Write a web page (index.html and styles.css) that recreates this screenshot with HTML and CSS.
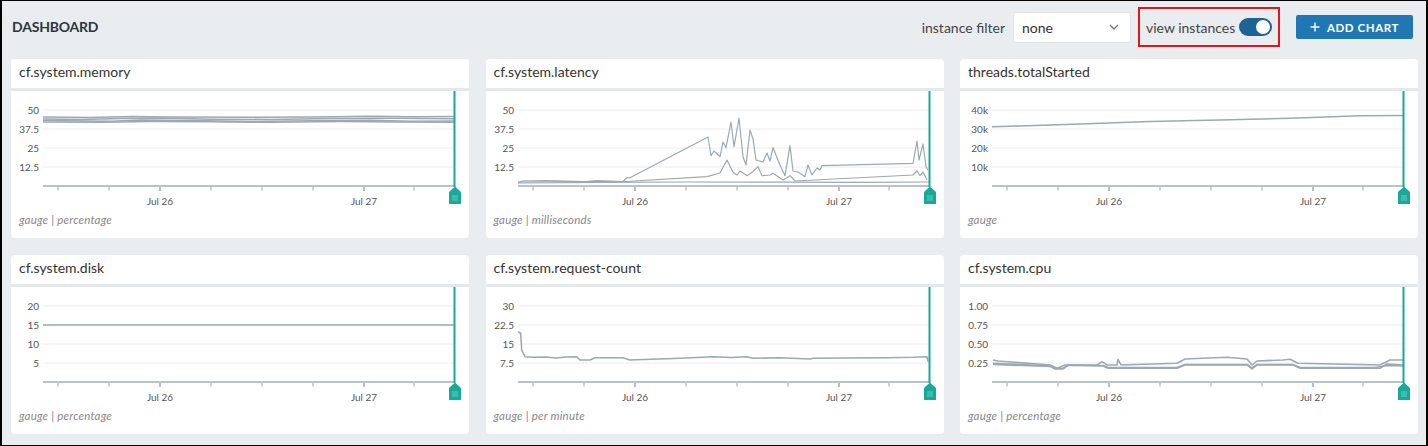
FILE: index.html
```html
<!DOCTYPE html>
<html>
<head>
<meta charset="utf-8">
<link rel="stylesheet" href="styles.css">
</head>
<body>
<div class="frame">
  <header class="topbar">
    <h1 class="title">DASHBOARD</h1>
    <div class="controls">
      <span class="label">instance filter</span>
      <div class="select">
        <span>none</span>
        <svg class="chev" width="10" height="6" viewBox="0 0 10 6"><path d="M1 1 L5 5 L9 1" fill="none" stroke="#777" stroke-width="1.3"/></svg>
      </div>
      <div class="highlight">
        <span class="label">view instances</span>
        <span class="toggle"><span class="knob"></span></span>
      </div>
      <button class="add">
        <svg width="10" height="10" viewBox="0 0 10 10"><path d="M5 0.5 V9.5 M0.5 5 H9.5" stroke="#fff" stroke-width="1.4"/></svg>
        ADD CHART
      </button>
    </div>
  </header>

  <main class="grid">
    <!-- memory -->
    <section class="card">
      <div class="card-title">cf.system.memory</div>
      <svg class="chart" viewBox="0 0 458 118" width="458" height="118">
        <g class="grid-lines"><line x1="32" x2="443" y1="19" y2="19"/><line x1="32" x2="443" y1="38" y2="38"/><line x1="32" x2="443" y1="57" y2="57"/><line x1="32" x2="443" y1="76" y2="76"/></g>
        <g class="ylab"><text x="28" y="22.5">50</text><text x="28" y="41.5">37.5</text><text x="28" y="60.5">25</text><text x="28" y="79.5">12.5</text></g>
        <g class="series">
          <polyline points="32,26 80,26.5 120,25.5 160,26 240,26.3 300,26 360,25.3 400,25.8 443,25.5"/>
          <polyline points="32,28 70,28.5 110,27.5 150,27 200,28.2 260,28.5 320,27.5 380,27.3 443,27.8"/>
          <polyline points="32,29.5 100,30.3 130,29 180,29.6 240,30.6 300,29.8 360,29.2 400,30.2 443,30"/>
          <polyline points="32,31 90,31.3 140,30.5 200,30.8 260,31.2 330,30.5 390,31 443,31.3"/>
        </g>
        <g class="axis">
          <line class="base" x1="32" x2="443" y1="95" y2="95"/>
          <line x1="47" x2="47" y1="96" y2="99.5"/><line x1="98" x2="98" y1="96" y2="99.5"/><line class="major" x1="149" x2="149" y1="96" y2="100"/><line x1="200" x2="200" y1="96" y2="99.5"/><line x1="251" x2="251" y1="96" y2="99.5"/><line x1="302" x2="302" y1="96" y2="99.5"/><line class="major" x1="353" x2="353" y1="96" y2="100"/><line x1="403" x2="403" y1="96" y2="99.5"/>
          <text class="xlab" x="149" y="113.5">Jul 26</text><text class="xlab" x="353" y="113.5">Jul 27</text>
        </g>
        <g class="cursor"><line x1="443.5" x2="443.5" y1="0" y2="96"/><path d="M438 101 L444 95.5 L450 101 L450 113 L438 113 Z"/><path class="grip" d="M442 104 V110 M444 104 V110 M446 104 V110"/></g>
      </svg>
      <div class="card-foot">gauge | percentage</div>
    </section>

    <!-- latency -->
    <section class="card">
      <div class="card-title">cf.system.latency</div>
      <svg class="chart" viewBox="0 0 458 118" width="458" height="118">
        <g class="grid-lines"><line x1="32" x2="443" y1="19" y2="19"/><line x1="32" x2="443" y1="38" y2="38"/><line x1="32" x2="443" y1="57" y2="57"/><line x1="32" x2="443" y1="76" y2="76"/></g>
        <g class="ylab"><text x="28" y="22.5">50</text><text x="28" y="41.5">37.5</text><text x="28" y="60.5">25</text><text x="28" y="79.5">12.5</text></g>
        <g class="series thin">
          <polyline points="32,92 36,90 60,89.5 100,90.5 110,89.5 137,90.5 141,86.5 144,86.8 222,46 225,64.7 228,60 234,65.7 237,51 240,56.7 245,31 248,55.7 253,27 257,65.7 260,74 264,39 267,48 270,69 277,71 281,62 284,70 287,56.7 294,74 299,84.7 304,54.7 307,80 312,81 319,85.7 322,74 326,84 331,77 334,79 336,74.7 427,72.3 431,50 433,69 437,53 440,75.7 442,79"/>
          <polyline points="32,91 80,90.5 140,90.5 221,85.7 234,82 241,69 247,81.3 251,84 254,80 261,84.7 267,80.7 272,75.7 276,84.7 284,84 287,82.3 297,89 304,84.7 309,90 427,84 431,80 434,84.7 437,81 441,89"/>
          <polyline points="32,92 120,91.3 200,91 300,91.2 380,91.3 443,91"/>
        </g>
        <g class="axis">
          <line class="base" x1="32" x2="443" y1="95" y2="95"/>
          <line x1="47" x2="47" y1="96" y2="99.5"/><line x1="98" x2="98" y1="96" y2="99.5"/><line class="major" x1="149" x2="149" y1="96" y2="100"/><line x1="200" x2="200" y1="96" y2="99.5"/><line x1="251" x2="251" y1="96" y2="99.5"/><line x1="302" x2="302" y1="96" y2="99.5"/><line class="major" x1="353" x2="353" y1="96" y2="100"/><line x1="403" x2="403" y1="96" y2="99.5"/>
          <text class="xlab" x="149" y="113.5">Jul 26</text><text class="xlab" x="353" y="113.5">Jul 27</text>
        </g>
        <g class="cursor"><line x1="443.5" x2="443.5" y1="0" y2="96"/><path d="M438 101 L444 95.5 L450 101 L450 113 L438 113 Z"/><path class="grip" d="M442 104 V110 M444 104 V110 M446 104 V110"/></g>
      </svg>
      <div class="card-foot">gauge | milliseconds</div>
    </section>

    <!-- threads -->
    <section class="card">
      <div class="card-title">threads.totalStarted</div>
      <svg class="chart" viewBox="0 0 458 118" width="458" height="118">
        <g class="grid-lines"><line x1="32" x2="443" y1="19" y2="19"/><line x1="32" x2="443" y1="38" y2="38"/><line x1="32" x2="443" y1="57" y2="57"/><line x1="32" x2="443" y1="76" y2="76"/></g>
        <g class="ylab"><text x="28" y="22.5">40k</text><text x="28" y="41.5">30k</text><text x="28" y="60.5">20k</text><text x="28" y="79.5">10k</text></g>
        <g class="series">
          <polyline points="32,35.7 60,35 120,33 190,30.5 260,29 330,27.3 400,24.8 443,24.5"/>
        </g>
        <g class="axis">
          <line class="base" x1="32" x2="443" y1="95" y2="95"/>
          <line x1="47" x2="47" y1="96" y2="99.5"/><line x1="98" x2="98" y1="96" y2="99.5"/><line class="major" x1="149" x2="149" y1="96" y2="100"/><line x1="200" x2="200" y1="96" y2="99.5"/><line x1="251" x2="251" y1="96" y2="99.5"/><line x1="302" x2="302" y1="96" y2="99.5"/><line class="major" x1="353" x2="353" y1="96" y2="100"/><line x1="403" x2="403" y1="96" y2="99.5"/>
          <text class="xlab" x="149" y="113.5">Jul 26</text><text class="xlab" x="353" y="113.5">Jul 27</text>
        </g>
        <g class="cursor"><line x1="443.5" x2="443.5" y1="0" y2="96"/><path d="M438 101 L444 95.5 L450 101 L450 113 L438 113 Z"/><path class="grip" d="M442 104 V110 M444 104 V110 M446 104 V110"/></g>
      </svg>
      <div class="card-foot">gauge</div>
    </section>

    <!-- disk -->
    <section class="card">
      <div class="card-title">cf.system.disk</div>
      <svg class="chart" viewBox="0 0 458 118" width="458" height="118">
        <g class="grid-lines"><line x1="32" x2="443" y1="19" y2="19"/><line x1="32" x2="443" y1="38" y2="38"/><line x1="32" x2="443" y1="57" y2="57"/><line x1="32" x2="443" y1="76" y2="76"/></g>
        <g class="ylab"><text x="28" y="22.5">20</text><text x="28" y="41.5">15</text><text x="28" y="60.5">10</text><text x="28" y="79.5">5</text></g>
        <g class="series">
          <polyline points="32,38 443,38"/>
        </g>
        <g class="axis">
          <line class="base" x1="32" x2="443" y1="95" y2="95"/>
          <line x1="47" x2="47" y1="96" y2="99.5"/><line x1="98" x2="98" y1="96" y2="99.5"/><line class="major" x1="149" x2="149" y1="96" y2="100"/><line x1="200" x2="200" y1="96" y2="99.5"/><line x1="251" x2="251" y1="96" y2="99.5"/><line x1="302" x2="302" y1="96" y2="99.5"/><line class="major" x1="353" x2="353" y1="96" y2="100"/><line x1="403" x2="403" y1="96" y2="99.5"/>
          <text class="xlab" x="149" y="113.5">Jul 26</text><text class="xlab" x="353" y="113.5">Jul 27</text>
        </g>
        <g class="cursor"><line x1="443.5" x2="443.5" y1="0" y2="96"/><path d="M438 101 L444 95.5 L450 101 L450 113 L438 113 Z"/><path class="grip" d="M442 104 V110 M444 104 V110 M446 104 V110"/></g>
      </svg>
      <div class="card-foot">gauge | percentage</div>
    </section>

    <!-- request-count -->
    <section class="card">
      <div class="card-title">cf.system.request-count</div>
      <svg class="chart" viewBox="0 0 458 118" width="458" height="118">
        <g class="grid-lines"><line x1="32" x2="443" y1="19" y2="19"/><line x1="32" x2="443" y1="38" y2="38"/><line x1="32" x2="443" y1="57" y2="57"/><line x1="32" x2="443" y1="76" y2="76"/></g>
        <g class="ylab"><text x="28" y="22.5">30</text><text x="28" y="41.5">22.5</text><text x="28" y="60.5">15</text><text x="28" y="79.5">7.5</text></g>
        <g class="series">
          <polyline points="32,44.7 34.7,46.3 35.7,63 39,69.7 47,70.3 60,70 70,71 80,70 90.7,69.7 94,73 104,73 109,70.7 137,70.7 144,73 194,71.3 227,69.7 245,70.5 261,69.7 267,71.3 294,70.7 324,72 327,71.3 360,71 400,70.8 427,70.3 441,69.7 442,74.7"/>
        </g>
        <g class="axis">
          <line class="base" x1="32" x2="443" y1="95" y2="95"/>
          <line x1="47" x2="47" y1="96" y2="99.5"/><line x1="98" x2="98" y1="96" y2="99.5"/><line class="major" x1="149" x2="149" y1="96" y2="100"/><line x1="200" x2="200" y1="96" y2="99.5"/><line x1="251" x2="251" y1="96" y2="99.5"/><line x1="302" x2="302" y1="96" y2="99.5"/><line class="major" x1="353" x2="353" y1="96" y2="100"/><line x1="403" x2="403" y1="96" y2="99.5"/>
          <text class="xlab" x="149" y="113.5">Jul 26</text><text class="xlab" x="353" y="113.5">Jul 27</text>
        </g>
        <g class="cursor"><line x1="443.5" x2="443.5" y1="0" y2="96"/><path d="M438 101 L444 95.5 L450 101 L450 113 L438 113 Z"/><path class="grip" d="M442 104 V110 M444 104 V110 M446 104 V110"/></g>
      </svg>
      <div class="card-foot">gauge | per minute</div>
    </section>

    <!-- cpu -->
    <section class="card">
      <div class="card-title">cf.system.cpu</div>
      <svg class="chart" viewBox="0 0 458 118" width="458" height="118">
        <g class="grid-lines"><line x1="32" x2="443" y1="19" y2="19"/><line x1="32" x2="443" y1="38" y2="38"/><line x1="32" x2="443" y1="57" y2="57"/><line x1="32" x2="443" y1="76" y2="76"/></g>
        <g class="ylab"><text x="28" y="22.5">1.00</text><text x="28" y="41.5">0.75</text><text x="28" y="60.5">0.50</text><text x="28" y="79.5">0.25</text></g>
        <g class="series">
          <polyline points="33,73 38,74 90,78 97,81.3 105,78 137,78 142,74.7 147,78 157,78 158,72.3 161,78 217,76.3 225,72 267,70.3 287,72 292,78 297,74 323,73 330,72.3 338,76.3 420,78 430,73 443,73"/>
          <polyline points="33,76.3 90,78.7 95,82 103,82 107,78 143,79 148,81.3 217,81.3 225,78 287,78 292,82 297,78 333,78 340,81.3 420,81.3 427,77 443,78"/>
          <polyline points="33,77.5 90,79.5 96,81.5 104,81 108,78.5 143,78.5 148,80.5 217,80.5 225,77.5 287,77.5 292,81 297,77.5 333,77.5 340,80.5 415,80.5 427,78.5 443,79"/>
        </g>
        <g class="axis">
          <line class="base" x1="32" x2="443" y1="95" y2="95"/>
          <line x1="47" x2="47" y1="96" y2="99.5"/><line x1="98" x2="98" y1="96" y2="99.5"/><line class="major" x1="149" x2="149" y1="96" y2="100"/><line x1="200" x2="200" y1="96" y2="99.5"/><line x1="251" x2="251" y1="96" y2="99.5"/><line x1="302" x2="302" y1="96" y2="99.5"/><line class="major" x1="353" x2="353" y1="96" y2="100"/><line x1="403" x2="403" y1="96" y2="99.5"/>
          <text class="xlab" x="149" y="113.5">Jul 26</text><text class="xlab" x="353" y="113.5">Jul 27</text>
        </g>
        <g class="cursor"><line x1="443.5" x2="443.5" y1="0" y2="96"/><path d="M438 101 L444 95.5 L450 101 L450 113 L438 113 Z"/><path class="grip" d="M442 104 V110 M444 104 V110 M446 104 V110"/></g>
      </svg>
      <div class="card-foot">gauge | percentage</div>
    </section>
  </main>
</div>
</body>
</html>
```

FILE: styles.css
```css
* { box-sizing: border-box; }
html, body { margin: 0; padding: 0; }
body {
  font-family: "Lato", "Liberation Sans", sans-serif;
  color: #333;
  background: #e9edf0;
}
.frame {
  width: 1428px;
  height: 446px;
  border-style: solid;
  border-color: #000;
  border-width: 1px 2px 1px 2px;
  background: #e9edf0;
  display: flex;
  flex-direction: column;
}
.topbar {
  height: 58px;
  display: flex;
  align-items: center;
  justify-content: space-between;
  padding: 0 13px 0 10px;
}
.title {
  margin: 0;
  font-size: 14px;
  font-weight: 700;
  color: #2b3640;
  letter-spacing: -0.2px;
  position: relative;
  top: -4px;
}
.controls {
  display: flex;
  align-items: center;
  height: 40px;
  margin-top: -6px;
}
.label {
  font-size: 14px;
  color: #444;
}
.select {
  width: 118px;
  height: 31px;
  margin-left: 8px;
  background: #fff;
  border: 1px solid #e1e4e7;
  border-radius: 2px;
  display: flex;
  align-items: center;
  justify-content: space-between;
  padding: 0 11px 0 8px;
  font-size: 14px;
  color: #333;
}
.chev { display: block; }
.highlight {
  margin-left: 7px;
  height: 40px;
  width: 142px;
  border: 2px solid #e8141b;
  display: flex;
  align-items: center;
  padding: 0 6px;
  justify-content: space-between;
}
.toggle {
  width: 33px;
  height: 18px;
  border-radius: 9px;
  background: #1d6396;
  display: flex;
  align-items: center;
  justify-content: flex-end;
  padding-right: 2px;
}
.knob {
  width: 14px;
  height: 14px;
  border-radius: 50%;
  background: #fff;
}
.add {
  margin-left: 16px;
  width: 117px;
  height: 24px;
  border: none;
  border-radius: 2px;
  background: #1f78b4;
  color: #fff;
  font-family: inherit;
  font-size: 11.5px;
  font-weight: 700;
  letter-spacing: 0.6px;
  display: flex;
  align-items: center;
  justify-content: center;
  gap: 7px;
  padding: 0;
}
.add svg { display: block; }
.grid {
  flex: 1;
  display: grid;
  grid-template-columns: repeat(3, 458px);
  grid-template-rows: 179px 179px;
  column-gap: 16.5px;
  row-gap: 17px;
  padding: 0 8px 10px 9px;
}
.card {
  background: #fff;
  border-radius: 4px;
  display: flex;
  flex-direction: column;
  overflow: hidden;
}
.card-title {
  height: 32px;
  border-bottom: 3px solid #e4e8eb;
  padding: 4px 8px 0;
  font-size: 14px;
  color: #333;
}
.chart { display: block; }
.grid-lines line { stroke: #ececee; stroke-width: 1; }
.ylab text {
  font-family: "Lato", "Liberation Sans", sans-serif;
  font-size: 10px;
  fill: #555;
  text-anchor: end;
}
.xlab {
  font-family: "Lato", "Liberation Sans", sans-serif;
  font-size: 10px;
  fill: #555;
  text-anchor: middle;
}
.series polyline {
  fill: none;
  stroke: #9ca9b2;
  stroke-width: 1.6;
  stroke-linejoin: round;
}
.series.thin polyline { stroke-width: 1.2; }
.axis line { stroke: #9aa4ab; stroke-width: 1; }
.axis line.major { stroke-width: 1.4; }
.axis line.base { stroke: #bac3c9; stroke-width: 2; }
.cursor line { stroke: #18a999; stroke-width: 2; }
.cursor path { fill: #18a999; }
.cursor path.grip { fill: none; stroke: #7fd4ca; stroke-width: 0.8; }
.card-foot {
  padding: 4px 8px 0;
  font-size: 11.5px;
  font-style: italic;
  color: #888;
  letter-spacing: 0.2px;
}
```
